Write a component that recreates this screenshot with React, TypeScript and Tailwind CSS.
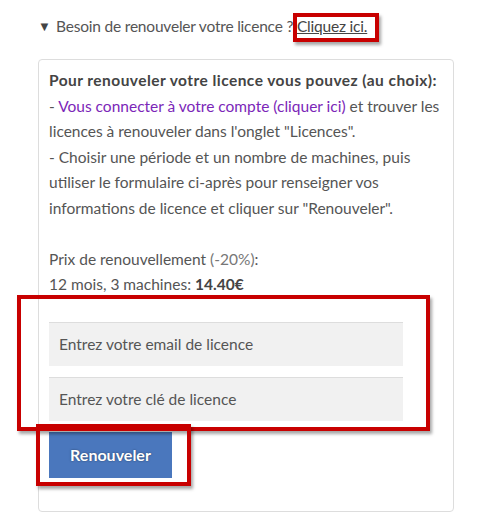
export default function App() {
  return (
    <div className="relative w-[480px] h-[517px] bg-white text-[#555] text-[15.5px]" style={{ fontFamily: 'Lato, "Liberation Sans", sans-serif' }}>
      <div className="pt-[14px] pl-[38px]">
        {/* summary */}
        <div className="flex items-center h-[25px] tracking-[-0.2px]">
          <span className="text-[13px] text-[#444] w-[18px]">▼</span>
          <span>
            Besoin de renouveler votre licence ?{' '}
            <a className="underline text-[#444]">Cliquez ici.</a>
          </span>
        </div>

        {/* card */}
        <div className="mt-[20px] w-[416px] h-[453px] border border-[#ddd] rounded-[4px] px-[10px] pt-[8px] leading-[25.5px]">
          <p className="font-bold text-[#444] tracking-[0.45px]">Pour renouveler votre licence vous pouvez (au choix):</p>
          <p>
            - <a className="text-[#7b26b8]">Vous connecter à votre compte (cliquer ici)</a> et trouver les licences à renouveler dans l'onglet "Licences".
          </p>
          <p>- Choisir une période et un nombre de machines, puis utiliser le formulaire ci-après pour renseigner vos informations de licence et cliquer sur "Renouveler".</p>
          <br />
          <p>
            Prix de renouvellement <span className="text-[#777]">(-20%)</span>:
          </p>
          <p>
            12 mois, 3 machines: <b className="text-[#444]">14.40€</b>
          </p>

          <div className="mt-[24px] flex flex-col gap-[11px] w-[354px]">
            <input
              className="h-[44px] bg-[#f1f1f1] border-t border-[#ddd] px-[10px] text-[15.5px] placeholder:text-[#555] outline-none"
              placeholder="Entrez votre email de licence"
            />
            <input
              className="h-[44px] bg-[#f1f1f1] border-t border-[#ddd] px-[10px] text-[15.5px] placeholder:text-[#555] outline-none"
              placeholder="Entrez votre clé de licence"
            />
          </div>
          <button className="mt-[11px] w-[123px] h-[46px] bg-[#4a77bd] text-white text-[16px] font-bold [text-shadow:0_0_2px_rgba(0,0,0,0.5)]">
            Renouveler
          </button>
        </div>
      </div>

      {/* annotation boxes */}
      <div className="absolute left-[293px] top-[13px] w-[86px] h-[29px] border-[4px] border-[#c80000] shadow-[2px_3px_3px_rgba(0,0,0,0.35)]" />
      <div className="absolute left-[17px] top-[295px] w-[413px] h-[136px] border-[4px] border-[#c80000] shadow-[2px_3px_3px_rgba(0,0,0,0.35)]" />
      <div className="absolute left-[36px] top-[424px] w-[155px] h-[62px] border-[4px] border-[#c80000] shadow-[2px_3px_3px_rgba(0,0,0,0.35)]" />
    </div>
  );
}
